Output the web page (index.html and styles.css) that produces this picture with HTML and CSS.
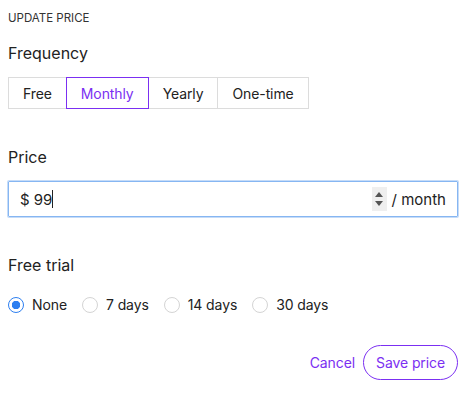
FILE: index.html
```html
<!DOCTYPE html>
<html lang="en">
<head>
  <meta charset="UTF-8">
  <title>Update Price</title>
  <link rel="stylesheet" href="styles.css">
</head>
<body>

<div class="panel">
  <h2 class="panel-title">UPDATE PRICE</h2>

  <!-- Frequency -->
  <div class="field">
    <div class="field-label">Frequency</div>
    <div class="segments">
      <button class="segment">Free</button>
      <button class="segment active">Monthly</button>
      <button class="segment">Yearly</button>
      <button class="segment">One-time</button>
    </div>
  </div>

  <!-- Price -->
  <div class="field">
    <div class="field-label">Price</div>
    <div class="price-input">
      <span class="currency">$</span>
      <span class="amount">99</span><span class="caret"></span>
      <span class="spinner">
        <span class="arrow-up"></span>
        <span class="arrow-down"></span>
      </span>
      <span class="unit">/ month</span>
    </div>
  </div>

  <!-- Free trial -->
  <div class="field">
    <div class="field-label">Free trial</div>
    <div class="radios">
      <label class="radio"><input type="radio" name="trial" checked> None</label>
      <label class="radio"><input type="radio" name="trial"> 7 days</label>
      <label class="radio"><input type="radio" name="trial"> 14 days</label>
      <label class="radio"><input type="radio" name="trial"> 30 days</label>
    </div>
  </div>

  <div class="actions">
    <button class="link-btn">Cancel</button>
    <button class="outline-btn">Save price</button>
  </div>
</div>

</body>
</html>
```

FILE: styles.css
```css
body {
  margin: 0;
  font-family: Inter, "Noto Sans", sans-serif;
  color: #222;
  background-color: #fff;
}
.panel {
  padding: 10px 7px 0 8px;
}
.panel-title {
  margin: 0 0 17px;
  font-size: 11.5px;
  line-height: 16px;
  font-weight: 400;
  color: #333;
}
.field {
  margin-bottom: 38px;
}
.field-label {
  font-size: 16px;
  line-height: 20px;
  margin-bottom: 14px;
}
.segments {
  display: flex;
}
.segment {
  position: relative;
  margin-left: -1px;
  padding: 0 14px;
  height: 32px;
  border: 1px solid #dcdcdc;
  background-color: #fff;
  font-family: inherit;
  font-size: 14px;
  letter-spacing: -0.1px;
  color: #222;
  cursor: pointer;
}
.segment:first-child {
  margin-left: 0;
}
.segment.active {
  z-index: 1;
  border-color: #7b2ff2;
  color: #7b2ff2;
}
.price-input {
  display: flex;
  align-items: center;
  height: 34px;
  padding: 0 11px 0 11px;
  border: 1px solid #86b6f2;
  box-shadow: 0 0 0 1px #c6dcf8;
  border-radius: 1px;
  font-size: 15px;
}
.currency {
  margin-right: 4px;
}
.caret {
  display: inline-block;
  width: 1px;
  height: 18px;
  background-color: #222;
}
.spinner {
  margin-left: auto;
  margin-right: 5px;
  width: 15px;
  height: 24px;
  background-color: #efefef;
  display: flex;
  flex-direction: column;
  align-items: center;
  justify-content: center;
  gap: 4px;
}
.arrow-up {
  width: 0;
  height: 0;
  border-left: 4px solid transparent;
  border-right: 4px solid transparent;
  border-bottom: 5px solid #555;
}
.arrow-down {
  width: 0;
  height: 0;
  border-left: 4px solid transparent;
  border-right: 4px solid transparent;
  border-top: 5px solid #555;
}
.unit {
  color: #222;
}
.radios {
  display: flex;
  gap: 15px;
  font-size: 14px;
  letter-spacing: -0.1px;
  margin-top: 20px;
}
.radio {
  display: flex;
  align-items: center;
  gap: 8px;
  line-height: 20px;
}
.radio input {
  appearance: none;
  margin: 0;
  width: 16px;
  height: 16px;
  border: 1px solid #d4d4d4;
  border-radius: 50%;
  background-color: #fff;
}
.radio input:checked {
  border: 1.5px solid #2e7ff0;
  background: radial-gradient(circle, #2e7ff0 0 4px, #fff 4.5px);
}
.actions {
  display: flex;
  justify-content: flex-end;
  align-items: center;
  gap: 8px;
  margin-top: -8px;
}
.link-btn {
  border: none;
  background: none;
  padding: 0;
  font-family: inherit;
  font-size: 14px;
  letter-spacing: -0.1px;
  color: #7b2ff2;
  cursor: pointer;
}
.outline-btn {
  height: 35px;
  padding: 0 12px;
  border: 1px solid #7b2ff2;
  border-radius: 18px;
  background-color: #fff;
  font-family: inherit;
  font-size: 14px;
  letter-spacing: -0.1px;
  color: #7b2ff2;
  cursor: pointer;
}
```
